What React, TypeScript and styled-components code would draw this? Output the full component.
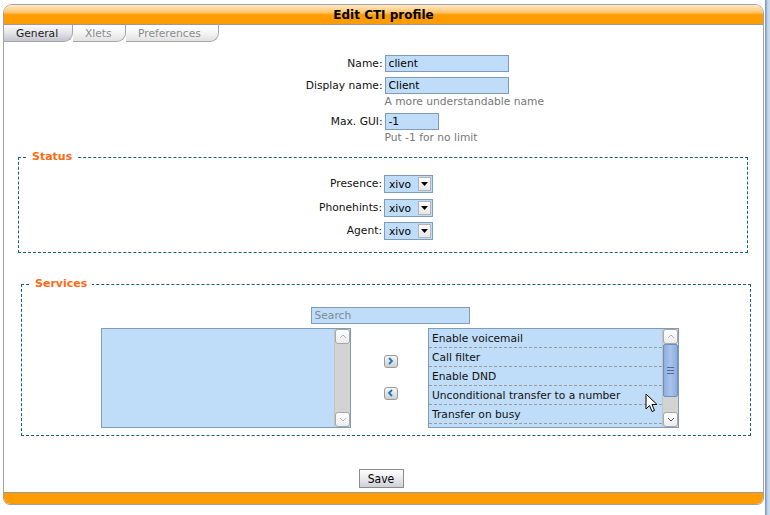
import React from 'react';
import styled, { createGlobalStyle } from 'styled-components';

const Global = createGlobalStyle`
  html, body { margin: 0; padding: 0; background: #fff; }
  body {
    font-family: "DejaVu Sans", Verdana, sans-serif;
    font-size: 10.7px;
    color: #111;
  }
`;

const Page = styled.div`
  display: flex;
  height: 515px;
  overflow: hidden;
`;

const Main = styled.div`
  width: 765px;
  padding: 4px 0 0 3px;
  box-sizing: border-box;
`;

const WindowEdge = styled.div`
  flex: 1;
  background: linear-gradient(to right, #7d9dc6 0, #7d9dc6 1px, #b7cbe5 2px, #d6e2f1 100%);
`;

const Frame = styled.div`
  width: 761px;
  height: 501px;
  box-sizing: border-box;
  border: 1px solid #a3a3a3;
  border-radius: 9px 9px 7px 7px;
  overflow: hidden;
  display: flex;
  flex-direction: column;
  position: relative;
`;

const Header = styled.div`
  height: 19px;
  border-bottom: 1px solid #9a9a9a;
  background: linear-gradient(#ffe9cc 0%, #ffc468 40%, #ff9c00 52%, #ff9c00 100%);
  display: flex;
  align-items: center;
  justify-content: center;
  font-weight: bold;
  font-size: 12px;
  color: #000;
`;

const TabBar = styled.div`
  display: flex;
  height: 17px;
`;

const Tab = styled.div<{ $active?: boolean; $w: number }>`
  width: ${p => p.$w}px;
  box-sizing: border-box;
  height: 17px;
  padding-left: 12px;
  display: flex;
  align-items: center;
  border-right: 1px solid #a6a6a6;
  border-bottom: 1px solid #a6a6a6;
  border-bottom-right-radius: 9px;
  color: ${p => (p.$active ? '#1a1a1a' : '#8a8a8a')};
  background: ${p =>
    p.$active
      ? 'linear-gradient(#fbfbfc, #e4e4ea 50%, #c3c3ce)'
      : 'linear-gradient(#ffffff, #f4f4f4 50%, #e0e0e0)'};
`;

const Body = styled.div`
  flex: 1;
  display: flex;
  flex-direction: column;
`;

const FormRow = styled.div<{ $mt?: number }>`
  display: grid;
  grid-template-columns: 1fr 1fr;
  column-gap: 2px;
  align-items: center;
  margin-top: ${p => p.$mt ?? 0}px;
`;

const Label = styled.label`
  text-align: right;
  line-height: 14px;
`;

const Hint = styled.div<{ $mt?: number }>`
  display: grid;
  grid-template-columns: 1fr 1fr;
  column-gap: 2px;
  margin-top: ${p => p.$mt ?? 0}px;
  color: #777;
  line-height: 14px;
  & > span { grid-column: 2; }
`;

const TextInput = styled.input<{ $w: number }>`
  width: ${p => p.$w}px;
  height: 17px;
  box-sizing: border-box;
  border: 1px solid #7f9db9;
  background: #bfddf8;
  font: 10.7px "DejaVu Sans", Verdana, sans-serif;
  color: #000;
  padding: 0 3px;
  margin: 0;
  outline: none;
`;

const Fieldset = styled.fieldset<{ $ml: number; $mt: number; $pt: number; $pb: number }>`
  margin: ${p => p.$mt}px 0 0 ${p => p.$ml}px;
  width: 730px;
  box-sizing: border-box;
  border: 1px dashed #175f82;
  padding: ${p => p.$pt}px 0 ${p => p.$pb}px 0;
  min-width: 0;
`;

const Legend = styled.legend`
  margin-left: 8px;
  padding: 0 5px;
  color: #ff6a14;
  font-weight: bold;
  font-size: 11px;
  line-height: 14px;
`;

const SelectBox = styled.div`
  width: 49px;
  height: 18px;
  box-sizing: border-box;
  border: 1px solid #7f9db9;
  background: #bfddf8;
  display: flex;
  align-items: center;
  justify-content: space-between;
  padding: 0 1px 0 4px;
  color: #000;
`;

const SelectArrow = styled.div`
  width: 13px;
  height: 14px;
  box-sizing: border-box;
  border: 1px solid #b5b5b5;
  background: linear-gradient(#ffffff, #e6e6e6);
  display: flex;
  align-items: center;
  justify-content: center;
`;

const SearchRow = styled.div`
  display: flex;
  justify-content: center;
  padding-left: 8px;
`;

const SearchInput = styled(TextInput)`
  color: #7a8a99;
`;

const Transfer = styled.div`
  display: flex;
  justify-content: center;
  align-items: center;
  padding-left: 8px;
  margin-top: 4px;
`;

const ListBox = styled.div<{ $w: number }>`
  width: ${p => p.$w}px;
  height: 100px;
  box-sizing: border-box;
  border: 1px solid #7f9db9;
  background: #bfddf8;
  display: flex;
  position: relative;
`;

const Items = styled.div`
  flex: 1;
  display: flex;
  flex-direction: column;
`;

const Item = styled.div`
  height: 19px;
  box-sizing: border-box;
  border-bottom: 1px dashed #9a9a9a;
  padding-left: 3px;
  display: flex;
  align-items: center;
  white-space: nowrap;
  color: #111;
`;

const Scrollbar = styled.div`
  width: 15px;
  display: flex;
  flex-direction: column;
  background: #d3d3d3;
  border-left: 1px solid #c4c4c4;
`;

const ScrollBtn = styled.div`
  height: 15px;
  box-sizing: border-box;
  border: 1px solid #a8a8a8;
  border-radius: 3px;
  background: linear-gradient(#ffffff, #ececec);
  display: flex;
  align-items: center;
  justify-content: center;
`;

const Track = styled.div`
  flex: 1;
  display: flex;
  flex-direction: column;
`;

const Thumb = styled.div`
  height: 53px;
  box-sizing: border-box;
  border: 1px solid #6e8fc0;
  border-radius: 2px;
  background: linear-gradient(to right, #8eafe0, #a8c2ea 50%, #8eafe0);
  display: flex;
  align-items: center;
  justify-content: center;
`;

const MoveButtons = styled.div`
  display: flex;
  flex-direction: column;
  gap: 19px;
  margin: 0 30px 2px 33px;
`;

const MoveBtn = styled.div`
  width: 14px;
  height: 13px;
  box-sizing: border-box;
  border: 1px solid #9a9a9a;
  border-radius: 3px;
  background: linear-gradient(#f6f6f6, #cfcfcf);
  display: flex;
  align-items: center;
  justify-content: center;
`;

const Cursor = styled.svg`
  position: absolute;
  left: 216px;
  top: 64px;
`;

const SaveRow = styled.div`
  display: flex;
  justify-content: center;
  margin-top: 33px;
  padding-right: 5px;
`;

const SaveButton = styled.button`
  width: 45px;
  height: 19px;
  box-sizing: border-box;
  border: 1px solid #8c8c8c;
  background: linear-gradient(#ffffff, #e9e9ee 50%, #cfcfd8);
  font: 12px "DejaVu Sans Condensed", "DejaVu Sans", sans-serif;
  color: #000;
  padding: 0;
  margin: 0;
`;

const Footer = styled.div`
  height: 11px;
  border-top: 1px solid #9a9a9a;
  background: #ff9c00;
`;

const Chevron = ({ dir, color }: { dir: 'up' | 'down' | 'left' | 'right'; color: string }) => {
  const pts: Record<string, string> = {
    up: '1,5 4,2 7,5',
    down: '1,2 4,5 7,2',
    left: '5,1 2,4 5,7',
    right: '2,1 5,4 2,7',
  };
  return (
    <svg width="8" height="8" viewBox="0 0 8 8">
      <polyline points={pts[dir]} fill="none" stroke={color} strokeWidth={dir === 'left' || dir === 'right' ? 1.8 : 1} />
    </svg>
  );
};

const Caret = () => (
  <svg width="7" height="4" viewBox="0 0 7 4">
    <polygon points="0,0 7,0 3.5,4" fill="#000" />
  </svg>
);

const Grip = () => (
  <svg width="7" height="7" viewBox="0 0 7 7">
    <g stroke="#4a6c9c" strokeWidth="1">
      <line x1="0" y1="0.5" x2="7" y2="0.5" />
      <line x1="0" y1="3.5" x2="7" y2="3.5" />
      <line x1="0" y1="6.5" x2="7" y2="6.5" />
    </g>
  </svg>
);

const Select = ({ value }: { value: string }) => (
  <SelectBox>
    <span>{value}</span>
    <SelectArrow>
      <Caret />
    </SelectArrow>
  </SelectBox>
);

const services = [
  'Enable voicemail',
  'Call filter',
  'Enable DND',
  'Unconditional transfer to a number',
  'Transfer on busy',
];

export default function App() {
  return (
    <>
      <Global />
      <Page>
        <Main>
          <Frame>
            <Header>Edit CTI profile</Header>
            <TabBar>
              <Tab $active $w={69}>General</Tab>
              <Tab $w={53}>Xlets</Tab>
              <Tab $w={93}>Preferences</Tab>
            </TabBar>
            <Body>
              <FormRow $mt={13}>
                <Label>Name:</Label>
                <TextInput $w={124} readOnly value="client" />
              </FormRow>
              <FormRow $mt={5}>
                <Label>Display name:</Label>
                <TextInput $w={124} readOnly value="Client" />
              </FormRow>
              <Hint $mt={1}><span>A more understandable name</span></Hint>
              <FormRow $mt={4}>
                <Label>Max. GUI:</Label>
                <TextInput $w={54} readOnly value="-1" />
              </FormRow>
              <Hint $mt={1}><span>Put -1 for no limit</span></Hint>

              <Fieldset $ml={14} $mt={5} $pt={11} $pb={12}>
                <Legend>Status</Legend>
                <FormRow>
                  <Label>Presence:</Label>
                  <Select value="xivo" />
                </FormRow>
                <FormRow $mt={6}>
                  <Label>Phonehints:</Label>
                  <Select value="xivo" />
                </FormRow>
                <FormRow $mt={5}>
                  <Label>Agent:</Label>
                  <Select value="xivo" />
                </FormRow>
              </Fieldset>

              <Fieldset $ml={17} $mt={24} $pt={16} $pb={7}>
                <Legend>Services</Legend>
                <SearchRow>
                  <SearchInput $w={159} readOnly value="Search" />
                </SearchRow>
                <Transfer>
                  <ListBox $w={250}>
                    <Items />
                    <Scrollbar>
                      <ScrollBtn><Chevron dir="up" color="#b0b0b0" /></ScrollBtn>
                      <Track />
                      <ScrollBtn><Chevron dir="down" color="#b0b0b0" /></ScrollBtn>
                    </Scrollbar>
                  </ListBox>
                  <MoveButtons>
                    <MoveBtn><Chevron dir="right" color="#1677c4" /></MoveBtn>
                    <MoveBtn><Chevron dir="left" color="#1677c4" /></MoveBtn>
                  </MoveButtons>
                  <ListBox $w={251}>
                    <Items>
                      {services.map(s => (
                        <Item key={s}>{s}</Item>
                      ))}
                    </Items>
                    <Scrollbar>
                      <ScrollBtn><Chevron dir="up" color="#b0b0b0" /></ScrollBtn>
                      <Track>
                        <Thumb><Grip /></Thumb>
                      </Track>
                      <ScrollBtn><Chevron dir="down" color="#555" /></ScrollBtn>
                    </Scrollbar>
                    <Cursor width="13" height="20" viewBox="0 0 13 20">
                      <path d="M1 1 L1 16 L4.5 12.5 L7 18.5 L9.5 17.5 L7 11.5 L12 11.5 Z" fill="#fff" stroke="#000" strokeWidth="1" strokeLinejoin="round" />
                    </Cursor>
                  </ListBox>
                </Transfer>
              </Fieldset>

              <SaveRow>
                <SaveButton>Save</SaveButton>
              </SaveRow>
            </Body>
            <Footer />
          </Frame>
        </Main>
        <WindowEdge />
      </Page>
    </>
  );
}
